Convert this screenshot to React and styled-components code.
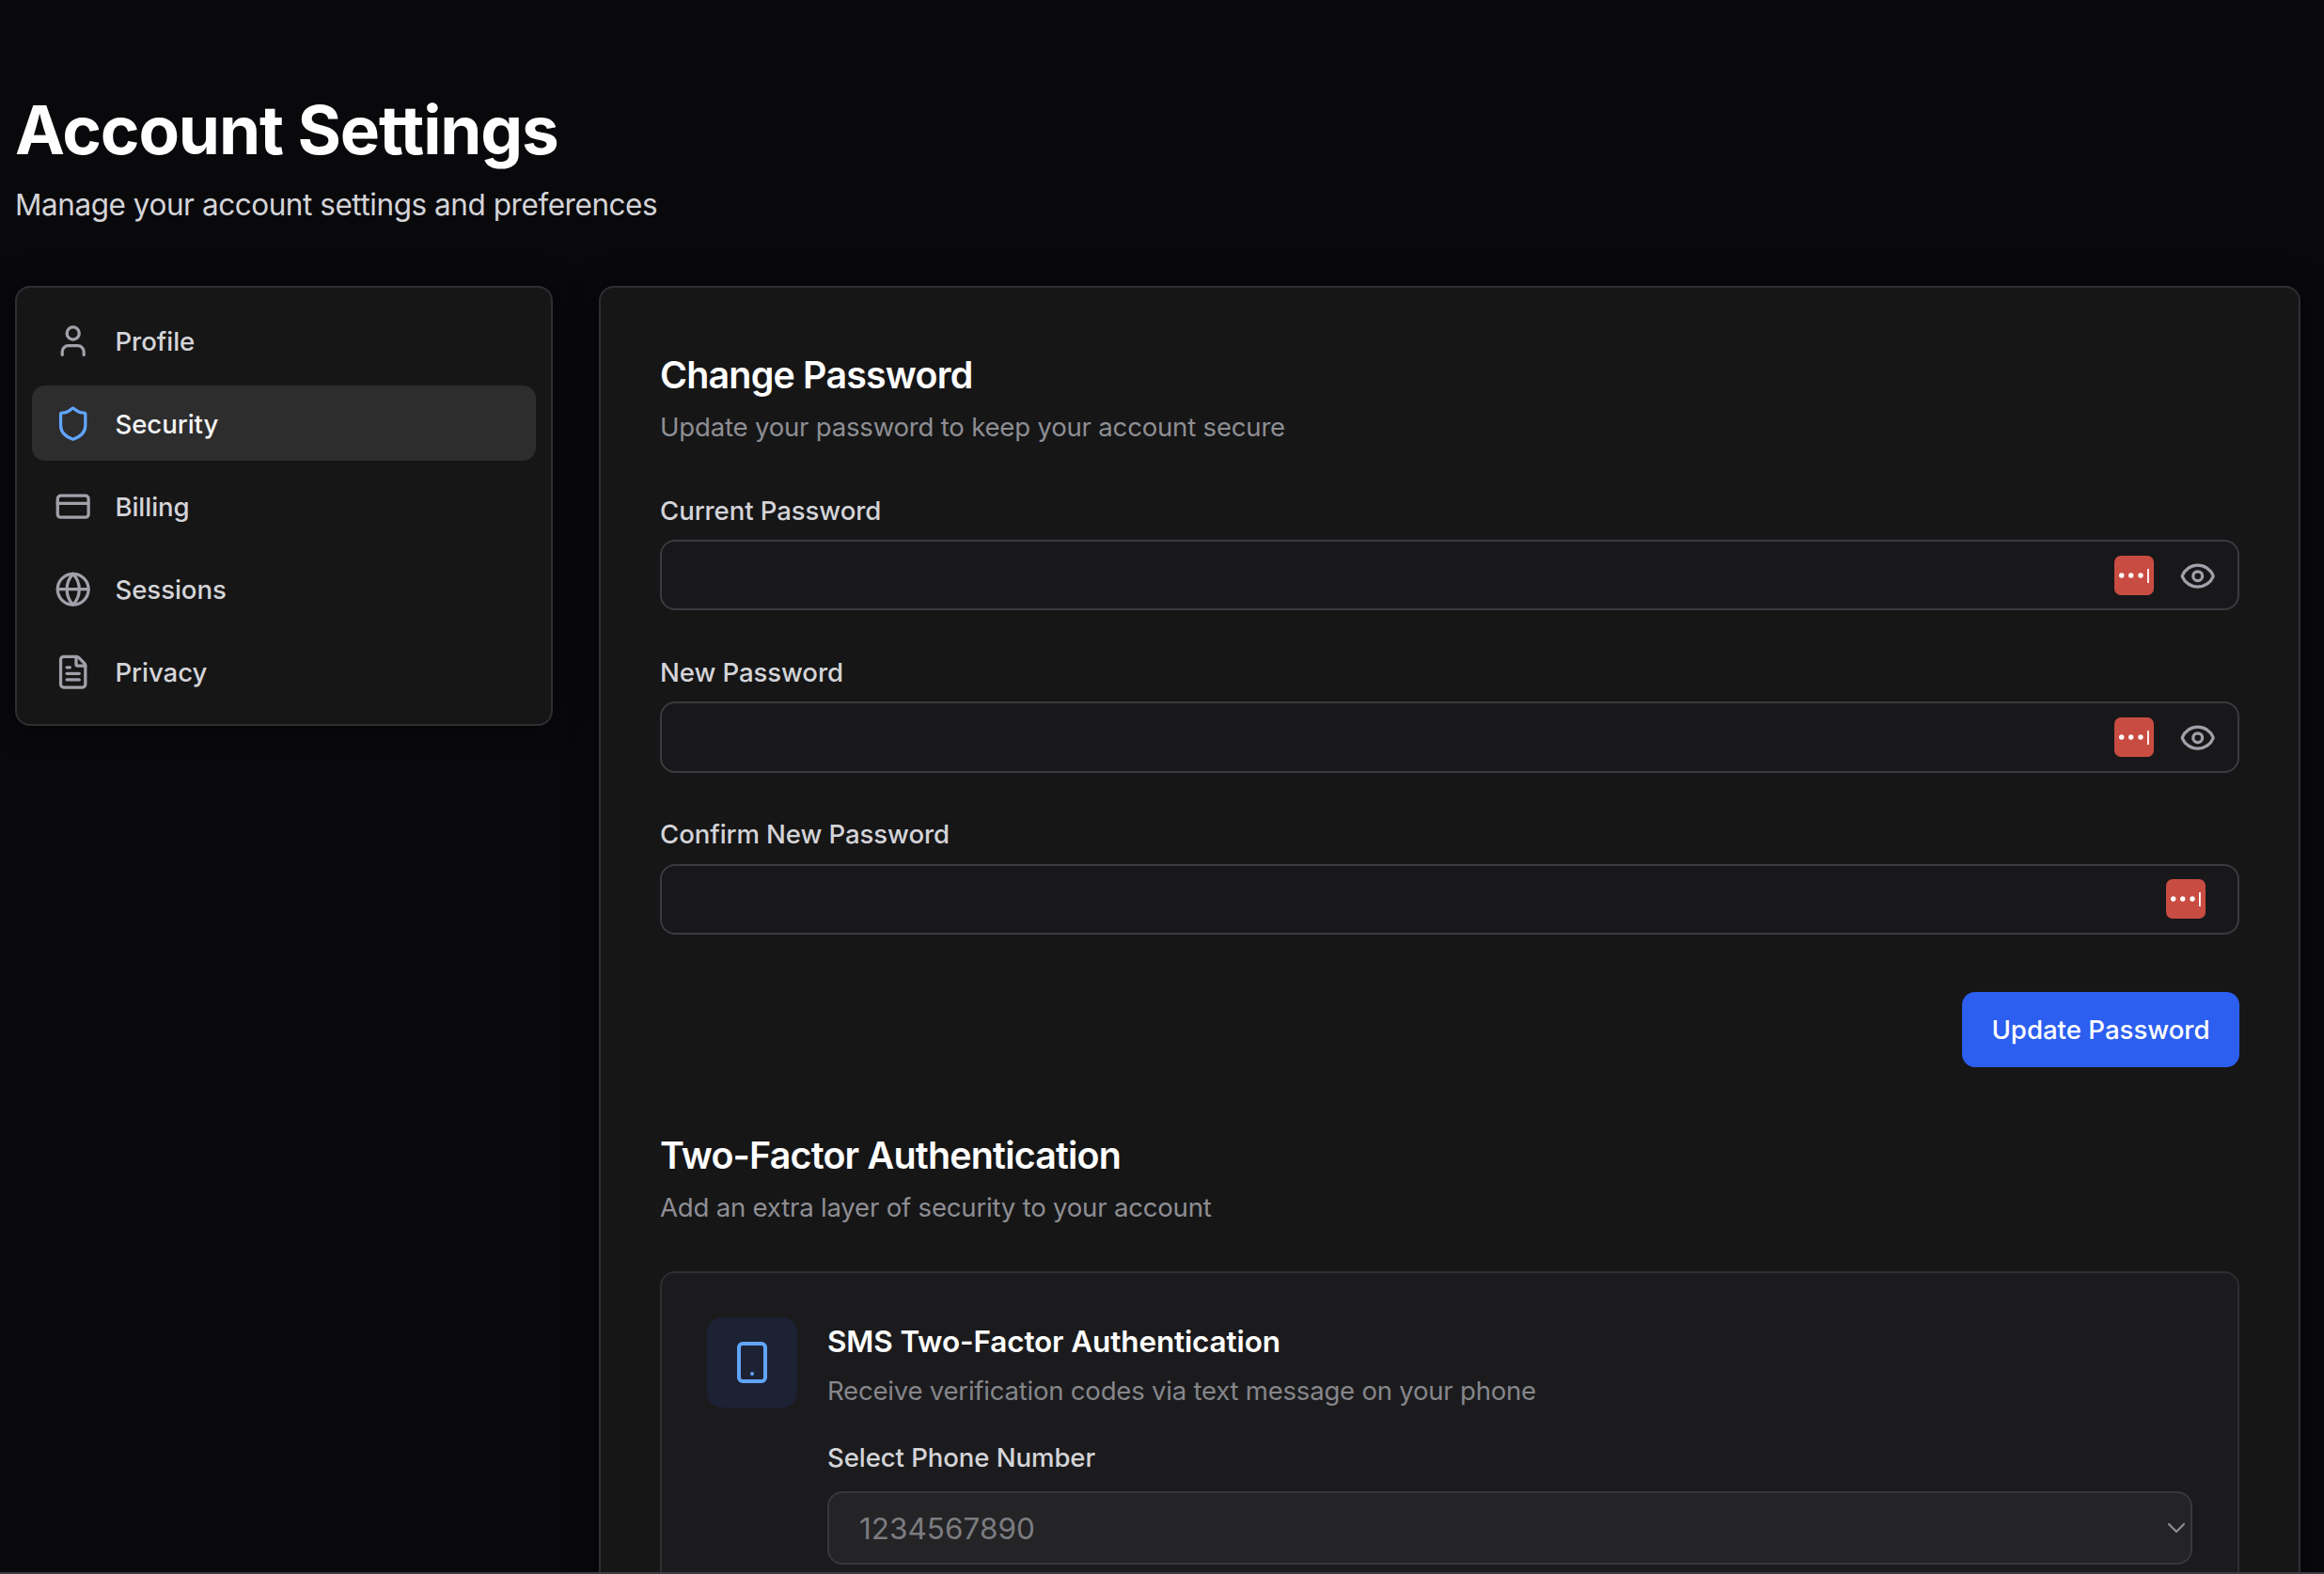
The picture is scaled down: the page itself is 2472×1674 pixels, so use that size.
import React from "react";
import styled, { createGlobalStyle } from "styled-components";
import { User, Shield, CreditCard, Globe, FileText, Eye, Smartphone, ChevronDown } from "lucide-react";

const Global = createGlobalStyle`
  * { box-sizing: border-box; }
  html, body { margin: 0; padding: 0; background: #09090c; }
  body { font-family: Inter, "Liberation Sans", sans-serif; -webkit-font-smoothing: antialiased; }
`;

const Page = styled.div`
  width: 2472px;
  height: 1674px;
  display: flex;
  flex-direction: column;
  background: #09090c;
  overflow: hidden;
`;
const Viewport = styled.div`
  flex: 1;
  min-height: 0;
  overflow: hidden;
  padding: 98px 25px 0 16px;
`;
const BottomEdge = styled.div`
  height: 2px;
  flex: none;
  background: #3d3d40;
`;
const Title = styled.h1`
  margin: 0;
  font-size: 71px;
  line-height: 80px;
  font-weight: 700;
  letter-spacing: -1.15px;
  color: #fff;
`;
const Subtitle = styled.p`
  margin: 16px 0 63px;
  font-size: 31.5px;
  line-height: 47px;
  letter-spacing: -0.45px;
  color: #d4d4d8;
`;
const Columns = styled.div`
  display: grid;
  grid-template-columns: 572px 1fr;
  gap: 49px;
  align-items: start;
`;
const Sidebar = styled.nav`
  display: flex;
  flex-direction: column;
  gap: 8px;
  padding: 16px;
  background: #161617;
  border: 2px solid #2e2e33;
  border-radius: 16px;
  box-shadow: 0 0 30px rgba(0, 0, 0, 0.6);
`;
const NavItem = styled.a`
  display: flex;
  align-items: center;
  gap: 25px;
  height: 80px;
  padding: 1px 0 0 24px;
  border-radius: 14px;
  font-size: 27.6px;
  font-weight: 450;
  letter-spacing: -0.05px;
  background: ${(p) => (p.$active ? "#2d2d2e" : "transparent")};
  color: ${(p) => (p.$active ? "#f4f4f5" : "#d4d4d8")};
  svg { color: ${(p) => (p.$active ? "#60a5fa" : "#a1a1aa")}; flex: none; }
`;
const Panel = styled.main`
  padding: 66.2px 63px 0;
  background: #161617;
  border: 2px solid #2e2e33;
  border-radius: 16px;
  box-shadow: 0 0 30px rgba(0, 0, 0, 0.6);
`;
const SectionTitle = styled.h2`
  margin: 0;
  font-size: 39.4px;
  line-height: 55px;
  font-weight: 600;
  letter-spacing: -0.8px;
  color: #fff;
`;
const SectionNote = styled.p`
  margin: 8px 0 0;
  font-size: 27.6px;
  line-height: 39.4px;
  letter-spacing: -0.22px;
  color: #8e8e93;
`;
const Form = styled.form`
  display: flex;
  flex-direction: column;
  gap: 46.7px;
  margin-top: 49.3px;
`;
const Label = styled.label`
  display: block;
  font-size: 27.6px;
  line-height: 39.4px;
  font-weight: 450;
  letter-spacing: -0.1px;
  color: #d4d4d8;
`;
const Field = styled.div`
  display: flex;
  align-items: center;
  height: 75.5px;
  margin-top: 10.7px;
  padding-right: ${(p) => (p.$reveal ? "23px" : "34px")};
  background: #18181a;
  border: 2px solid #3a3a40;
  border-radius: 16px;
`;
const Input = styled.input`
  flex: 1;
  min-width: 0;
  height: 100%;
  padding: 0 32px;
  border: 0;
  outline: 0;
  background: transparent;
  color: #fff;
  font: inherit;
`;
const KeyBadge = styled.svg`
  width: 42px;
  height: 42px;
  flex: none;
`;
const RevealButton = styled.button`
  display: flex;
  margin: 2px 0 0 27px;
  padding: 0;
  border: 0;
  background: none;
  color: #a1a1aa;
`;
const Actions = styled.div`
  display: flex;
  justify-content: flex-end;
  margin-top: 60.5px;
`;
const PrimaryButton = styled.button`
  width: 295px;
  height: 80px;
  border: 0;
  border-radius: 14px;
  background: #2c5ff0;
  color: #fff;
  font: 450 27.6px Inter, sans-serif;
`;
const TwoFactor = styled.section`
  margin-top: 67.5px;
`;
const Card = styled.div`
  display: flex;
  gap: 32px;
  margin-top: 47.6px;
  padding: 47px 48px 48px;
  background: #1b1b1d;
  border: 2px solid #2e2e33;
  border-radius: 16px;
`;
const IconBox = styled.div`
  display: flex;
  align-items: center;
  justify-content: center;
  flex: none;
  width: 96px;
  height: 96px;
  border-radius: 16px;
  background: #1c2233;
  color: #60a5fa;
`;
const CardBody = styled.div`
  flex: 1;
  min-width: 0;
  padding-top: 1.5px;
`;
const CardTitle = styled.h3`
  margin: 0;
  font-size: 31.5px;
  line-height: 47px;
  font-weight: 600;
  letter-spacing: -0.14px;
  color: #fff;
`;
const CardNote = styled(SectionNote)`
  margin-top: 10px;
  letter-spacing: -0.25px;
  color: #86868b;
`;
const PhoneLabel = styled(Label)`
  margin-top: 31.6px;
`;
const SelectWrap = styled.div`
  position: relative;
  margin-top: 16px;
`;
const Select = styled.select`
  display: block;
  width: 100%;
  height: 78px;
  padding: 1px 32px 0;
  appearance: none;
  outline: 0;
  background: #242426;
  border: 2px solid #38383c;
  border-radius: 16px;
  color: #7c7c80;
  font: 400 31.5px Inter, sans-serif;
`;
const Chevron = styled.span`
  position: absolute;
  right: 1px;
  top: 23px;
  display: flex;
  color: #8e8e93;
`;

const Key = () => (
  <KeyBadge viewBox="0 0 42 42">
    <rect width="42" height="42" rx="7" fill="#c94c42" />
    <circle cx="7.7" cy="21" r="2.7" fill="#fff" />
    <circle cx="17.7" cy="21" r="2.7" fill="#fff" />
    <circle cx="28" cy="21" r="2.7" fill="#fff" />
    <rect x="35" y="14" width="1.8" height="15" fill="#fff" />
  </KeyBadge>
);

const nav = [
  ["Profile", User],
  ["Security", Shield],
  ["Billing", CreditCard],
  ["Sessions", Globe],
  ["Privacy", FileText],
];

const PasswordField = ({ label, reveal }) => (
  <div>
    <Label>{label}</Label>
    <Field $reveal={reveal}>
      <Input type="password" />
      <Key />
      {reveal && (
        <RevealButton type="button">
          <Eye size={39.4} strokeWidth={2} />
        </RevealButton>
      )}
    </Field>
  </div>
);

export default function App() {
  return (
    <Page>
      <Global />
      <Viewport>
        <Title>Account Settings</Title>
        <Subtitle>Manage your account settings and preferences</Subtitle>
        <Columns>
          <Sidebar>
            {nav.map(([name, Icon]) => (
              <NavItem key={name} $active={name === "Security"}>
                <Icon size={39.4} strokeWidth={2} />
                {name}
              </NavItem>
            ))}
          </Sidebar>
          <Panel>
            <SectionTitle>Change Password</SectionTitle>
            <SectionNote>Update your password to keep your account secure</SectionNote>
            <Form>
              <PasswordField label="Current Password" reveal />
              <PasswordField label="New Password" reveal />
              <PasswordField label="Confirm New Password" />
            </Form>
            <Actions>
              <PrimaryButton type="button">Update Password</PrimaryButton>
            </Actions>
            <TwoFactor>
              <SectionTitle>Two-Factor Authentication</SectionTitle>
              <SectionNote>Add an extra layer of security to your account</SectionNote>
              <Card>
                <IconBox>
                  <Smartphone size={48} strokeWidth={2} />
                </IconBox>
                <CardBody>
                  <CardTitle>SMS Two-Factor Authentication</CardTitle>
                  <CardNote>Receive verification codes via text message on your phone</CardNote>
                  <PhoneLabel>Select Phone Number</PhoneLabel>
                  <SelectWrap>
                    <Select defaultValue="1234567890">
                      <option>1234567890</option>
                    </Select>
                    <Chevron>
                      <ChevronDown size={32} strokeWidth={1.6} />
                    </Chevron>
                  </SelectWrap>
                </CardBody>
              </Card>
            </TwoFactor>
          </Panel>
        </Columns>
      </Viewport>
      <BottomEdge />
    </Page>
  );
}
